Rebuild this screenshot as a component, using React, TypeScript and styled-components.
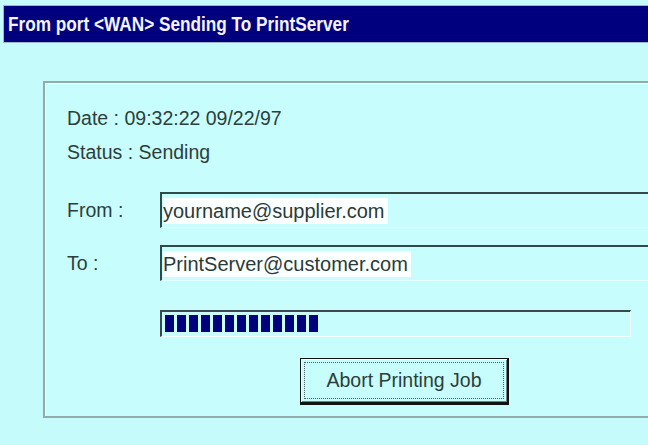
import React from "react";
import styled, { createGlobalStyle } from "styled-components";

const GlobalStyle = createGlobalStyle`
  html, body {
    margin: 0;
    padding: 0;
    overflow: hidden;
    background: #c6fbfb;
  }
  body {
    font-family: "Liberation Sans", Arial, sans-serif;
  }
`;

const Screen = styled.div`
  width: 648px;
  height: 445px;
  padding: 5px 0 0 3px;
  box-sizing: border-box;
  background: #c6fbfb;
  overflow: hidden;
`;

const TitleBar = styled.div`
  height: 38px;
  box-sizing: border-box;
  background: #00007e;
  border: 1px solid #9cb8c8;
  border-right: none;
  display: flex;
  align-items: center;
  padding-left: 4px;
`;

const TitleText = styled.span`
  display: inline-block;
  color: #f4f4ff;
  font-size: 20px;
  font-weight: 700;
  white-space: nowrap;
  transform: scaleX(0.86);
  transform-origin: left center;
`;

const Body = styled.div`
  padding: 38px 0 0 40px;
`;

const Panel = styled.div`
  width: 640px;
  height: 337px;
  box-sizing: border-box;
  border: 2px solid #93aaaa;
  border-right: none;
  box-shadow: inset 1px 1px 0 #e6ffff;
  background: #c8fdfd;
  padding: 23px 0 0 22px;
  display: grid;
  grid-template-columns: 93px 1fr;
  align-content: start;
  color: #2c3d3b;
`;

const InfoLine = styled.div<{ $gap?: number }>`
  grid-column: 1 / -1;
  font-size: 19.5px;
  line-height: 24px;
  margin-top: ${(p) => p.$gap ?? 0}px;
  white-space: nowrap;
`;

const Label = styled.div<{ $gap?: number }>`
  font-size: 19.5px;
  line-height: 36px;
  margin-top: ${(p) => p.$gap ?? 0}px;
`;

const Field = styled.div<{ $gap?: number }>`
  height: 36px;
  box-sizing: border-box;
  margin-top: ${(p) => p.$gap ?? 0}px;
  border-top: 2px solid #2f4a48;
  border-left: 2px solid #2f4a48;
  border-bottom: 1px solid #e8ffff;
  background: #c8fdfd;
  display: flex;
  align-items: center;
  padding-left: 1px;
`;

const FieldText = styled.span`
  background: #fbffff;
  color: #2a3a38;
  font-size: 20px;
  line-height: 26px;
  padding-right: 3px;
  white-space: nowrap;
`;

const Progress = styled.div`
  grid-column: 2;
  margin-top: 29px;
  width: 471px;
  height: 27px;
  box-sizing: border-box;
  border-top: 2px solid #3a4a4a;
  border-left: 2px solid #3a4a4a;
  border-bottom: 1px solid #f2ffff;
  border-right: 1px solid #f2ffff;
  padding: 3px 0 0 3px;
  display: flex;
  gap: 3px;
  align-items: flex-start;
`;

const Block = styled.div`
  width: 9px;
  height: 17px;
  background: #00007c;
`;

const ButtonRow = styled.div`
  grid-column: 2;
  margin-top: 21px;
  padding-left: 140px;
`;

const Button = styled.button`
  width: 209px;
  height: 47px;
  box-sizing: border-box;
  padding: 3px;
  background: #c8fdfd;
  border: 1px solid #111;
  border-right-width: 2px;
  border-bottom-width: 3px;
  box-shadow: inset 1px 1px 0 #ffffff, inset -1px -1px 0 #6d8585;
  cursor: pointer;
  font-family: "Liberation Sans", Arial, sans-serif;
`;

const FocusRing = styled.span`
  display: flex;
  align-items: center;
  justify-content: center;
  height: 100%;
  box-sizing: border-box;
  border: 1px dotted #4a5e5e;
  color: #2c3d3b;
  font-size: 19.5px;
  white-space: nowrap;
`;

const App = () => {
  const blocks = Array.from({ length: 13 });
  return (
    <>
      <GlobalStyle />
      <Screen>
        <TitleBar>
          <TitleText>From port &lt;WAN&gt; Sending To PrintServer</TitleText>
        </TitleBar>
        <Body>
          <Panel>
            <InfoLine>Date : 09:32:22 09/22/97</InfoLine>
            <InfoLine $gap={10}>Status : Sending</InfoLine>

            <Label $gap={28}>From :</Label>
            <Field $gap={28}>
              <FieldText>yourname@supplier.com</FieldText>
            </Field>

            <Label $gap={17}>To :</Label>
            <Field $gap={17}>
              <FieldText>PrintServer@customer.com</FieldText>
            </Field>

            <Progress>
              {blocks.map((_, i) => (
                <Block key={i} />
              ))}
            </Progress>

            <ButtonRow>
              <Button>
                <FocusRing>Abort Printing Job</FocusRing>
              </Button>
            </ButtonRow>
          </Panel>
        </Body>
      </Screen>
    </>
  );
};

export default App;
